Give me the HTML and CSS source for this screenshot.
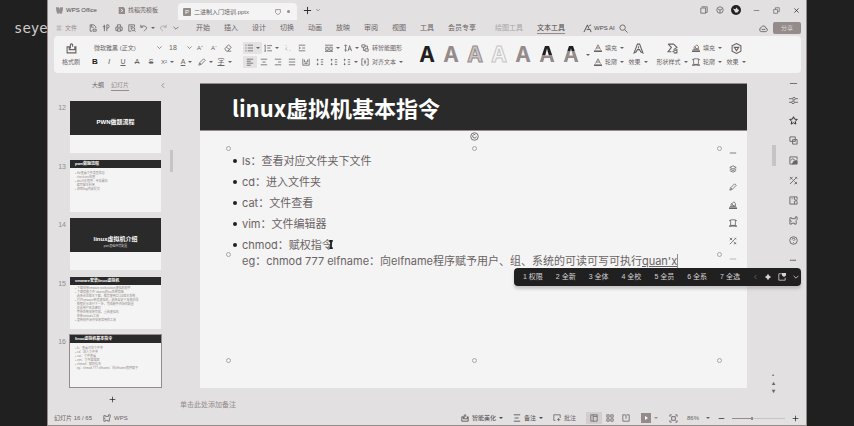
FILE: index.html
```html
<!DOCTYPE html>
<html lang="zh-CN">
<head>
<meta charset="utf-8">
<title>二进制入门培训.pptx</title>
<link rel="stylesheet" href="styles.css">
</head>
<body>
<svg class="defs" aria-hidden="true">
<symbol id="wps" viewBox="0 0 10 10"><path d="M0 1h4l1 4 1-4h4L8 9H5.500L4.500 6 4 9H2z" fill="currentColor"/></symbol>
<symbol id="doc" viewBox="0 0 10 10"><path d="M1 0h7l2 2v8H1z" fill="currentColor" stroke="none"/><path d="M4 3l3 2-3 2" stroke="#fff"/></symbol>
<symbol id="menu" viewBox="0 0 10 10"><path d="M1 2h8M2 5h6M1 8h8"/></symbol>
<symbol id="save" viewBox="0 0 10 10"><path d="M8.500 5V3.500L6 1H1.500v8H4M3 1v3h3M5 9V6.500h4V9z"/></symbol>
<symbol id="export" viewBox="0 0 10 10"><path d="M1 3h3M2 5h2M3 1v8M6 9V1h2q2 2 0 4H6"/></symbol>
<symbol id="print" viewBox="0 0 10 10"><path d="M3 4V1h4v3M3 8H1V4h8v4H7M3 6h4v3H3z"/></symbol>
<symbol id="preview" viewBox="0 0 10 10"><path d="M4 9H1V1h7v3M3 3h3M3 5h2"/><circle cx="6.500" cy="6.500" r="2"/><path d="M8 8l1.500 1.500"/></symbol>
<symbol id="undo" viewBox="0 0 10 10"><path d="M1 1v3h3M1 4q3-3 6-1t0 4L5 9"/></symbol>
<symbol id="redo" viewBox="0 0 10 10"><path d="M9 1v3H6M9 4Q6 1 3 3t0 4l2 2"/></symbol>
<symbol id="down" viewBox="0 0 10 10"><path d="M2 3.500l3 3 3-3"/></symbol>
<symbol id="left" viewBox="0 0 10 10"><path d="M7 1L3 5l4 4"/></symbol>
<symbol id="plus" viewBox="0 0 10 10"><path d="M5 1v8M1 5h8"/></symbol>
<symbol id="minus" viewBox="0 0 10 10"><path d="M1 5h8"/></symbol>
<symbol id="close" viewBox="0 0 10 10"><path d="M2 2l6 6M8 2L2 8"/></symbol>
<symbol id="restore" viewBox="0 0 10 10"><path d="M1 3.500h5.500V9H1zM3.500 3.500V1H9v5.500H6.500"/></symbol>
<symbol id="panel" viewBox="0 0 10 10"><path d="M1 2.500h6V9H1zM2 1h7v7H7"/></symbol>
<symbol id="tray" viewBox="0 0 10 10"><path d="M5 1H1v8h8V6"/><path d="M5 0h5v3L7.500 5 5 3z" fill="currentColor" stroke="none"/></symbol>
<symbol id="spark" viewBox="0 0 10 10"><path d="M5 1l1.500 2.500L9 5 6.500 6.500 5 9 3.500 6.500 1 5l2.500-1.500z" fill="currentColor" stroke="none"/></symbol>
<symbol id="cube" viewBox="0 0 10 10"><circle cx="5" cy="5" r="4"/><path d="M2 3.500l3 1.500 3-1.500M5 5v4"/></symbol>
<symbol id="screen" viewBox="0 0 10 10"><path d="M1 1h8v5L6 9H4L1 6z"/></symbol>
<symbol id="search" viewBox="0 0 10 10"><circle cx="4" cy="4" r="3"/><path d="M6.500 6.500L9.500 9.500"/></symbol>
<symbol id="cloud" viewBox="0 0 10 10"><path d="M2.500 8.500Q0 8 1 5.500 1 4 2.500 4q1-3 4-1.500 1 .5 1 2Q10 5 9 7.500 8.500 8.500 7 8.500zM3 6h4"/></symbol>
<symbol id="bird" viewBox="0 0 10 10"><path d="M1 3l3 1 2-2 1 2 2 1-2 3H4L3 6z" fill="currentColor" stroke="none"/></symbol>
<symbol id="ai" viewBox="0 0 10 10"><path d="M1 9l4-8 1.500 4M4 6h4l1 3M7 2l2-1"/></symbol>
<symbol id="brush" viewBox="0 0 10 10"><path d="M1 3.500h2V6h5V3.500h1V9H1zM4 5V1.500Q5 0 6 1.500v2"/></symbol>
<symbol id="eraser" viewBox="0 0 10 10"><path d="M1 6l4.500-5L9 4 5 9H3zM3 4l4 3M5 9h4"/></symbol>
<symbol id="list" viewBox="0 0 10 10"><path d="M3.500 1.500H10M3.500 5H10M3.500 8.500H10M.5 1.500h1.500M.5 5h1.500M.5 8.500h1.500"/></symbol>
<symbol id="numlist" viewBox="0 0 10 10"><path d="M4 2h6M4 5h4M4 8.500h6M1.500 1v8M.5 2l1-1M.5 9h2"/></symbol>
<symbol id="outdent" viewBox="0 0 10 10"><path d="M2 2h1M4 4.500L2 6l2 2M7 8h1"/></symbol>
<symbol id="indent" viewBox="0 0 10 10"><path d="M1 1.500h8M5 5h4M1 8.500h8M1 3.500L3 5 1 6.500"/></symbol>
<symbol id="textdir" viewBox="0 0 10 10"><path d="M0 1.500h10M1 4h3v4H1zM6 4h3v4H6zM0 9.500h10"/></symbol>
<symbol id="spacing" viewBox="0 0 10 10"><path d="M2 1v8M.5 2.500L2 1l1.500 1.500M.5 7.500L2 9l1.500-1.500M5 9l2-7 2.500 7M5.500 6.500H9"/></symbol>
<symbol id="convert" viewBox="0 0 10 10"><path d="M1 1h4v3H1zM5 6h4v3H5zM3 4v4h2M5 2.500h3V6"/></symbol>
<symbol id="al" viewBox="0 0 10 10"><path d="M1 1.500h8M1 4h5M1 6.500h8M1 9h5"/></symbol>
<symbol id="ac" viewBox="0 0 10 10"><path d="M1 1.500h8M3 5h4M1 8.500h8"/></symbol>
<symbol id="ar" viewBox="0 0 10 10"><path d="M1 1.500h8M5 5h4M1 8.500h8"/></symbol>
<symbol id="aj" viewBox="0 0 10 10"><path d="M1 1.500h8M1 5h8M1 8.500h8"/></symbol>
<symbol id="dist" viewBox="0 0 10 10"><path d="M1 1v8M9 1v8M3 2v3h4V2M3 7h4M1 9h8"/></symbol>
<symbol id="cols" viewBox="0 0 10 10"><path d="M2 1v3M2 6v3M6 2h3M6 5h3M6 8h3M1 2h2M1 8h2"/></symbol>
<symbol id="box" viewBox="0 0 10 10"><path d="M3 1H1v8h2M7 1h2v8H7M5 2v6M3.500 5h3"/></symbol>
<symbol id="sigma" viewBox="0 0 10 10"><path d="M1 1h5l3 3-3 2M1 1l3 3-3 4h3M5 8l4-2v3H6"/></symbol>
<symbol id="hex" viewBox="0 0 10 10"><path d="M5 .5L9 2.500v5L5 9.500 1 7.500v-5zM3 4h4L5 7z"/></symbol>
<symbol id="bigA" viewBox="0 0 10 10"><path d="M1 9l3-8h2l3 8-2-1-1-2H4L3 8zM5 3v2"/></symbol>
<symbol id="fillA" viewBox="0 0 10 10"><path d="M2 7l3-6 3 6M3.500 5h3"/><path d="M0 9h10" stroke-width="2"/></symbol>
<symbol id="bucket" viewBox="0 0 10 10"><path d="M2 5l4-4 2 2v3H3zM3 3l3 3M1 7h8"/><path d="M0 9h10" stroke-width="2"/></symbol>
<symbol id="frame" viewBox="0 0 10 10"><path d="M2 1h6v7H2zM0 2h2M8 2h2"/><path d="M0 9h3M7 9h3M2 8.500h6" stroke-width="1.500"/></symbol>
<symbol id="star" viewBox="0 0 10 10"><path d="M5 .8l1.200 2.700 3 .3L7 6l.6 3L5 7.500 2.400 9 3 6 .8 3.800l3-.3z"/></symbol>
<symbol id="sliders" viewBox="0 0 10 10"><path d="M0 3h4M7 3h3M0 7h3M6 7h4"/><circle cx="5.500" cy="3" r="1.500"/><circle cx="4.500" cy="7" r="1.500"/></symbol>
<symbol id="copy" viewBox="0 0 10 10"><path d="M1 1h6v5H1zM4 4h5v5H4z"/></symbol>
<symbol id="pic" viewBox="0 0 10 10"><path d="M9 4V1H1v8h4M2 5l2-2 3 2"/><path d="M4 9l1-3 4-1v4z" fill="currentColor"/></symbol>
<symbol id="tools" viewBox="0 0 10 10"><path d="M1 9l8-8M1 1l3 3M6 6l3 3M7 1l2 2M1 4l3-3M6 9l3-2"/></symbol>
<symbol id="book" viewBox="0 0 10 10"><path d="M1 1h8v3M1 1v8h8V6M6 1v3l3 1-3 1v3M3 3h1"/></symbol>
<symbol id="chart" viewBox="0 0 10 10"><path d="M1 2h2v1h4V1h2v3L8 5v4H6V8H3v1H1zM1 5l2 1"/></symbol>
<symbol id="help" viewBox="0 0 10 10"><circle cx="5" cy="5" r="4.200"/><path d="M3.500 4q0-1.500 1.500-1.500T6.500 4L5 5.500M5 7v1"/></symbol>
<symbol id="layers" viewBox="0 0 10 10"><path d="M5 1l4 2-4 2-4-2zM1 5l4 2 4-2M1 7l4 2 4-2"/></symbol>
<symbol id="pen" viewBox="0 0 10 10"><path d="M1 9l1-3 5-5 2 2-5 5zM2 6l2 2"/></symbol>
<symbol id="notes" viewBox="0 0 10 10"><path d="M1 1h8M2 5h5M1 9h8"/></symbol>
<symbol id="comment" viewBox="0 0 10 10"><path d="M3 8H1V1h8v4M5 7h4M7 5v4"/></symbol>
<symbol id="normal" viewBox="0 0 10 10"><path d="M1 1h8v8H1zM4 1v8M4 3h5"/></symbol>
<symbol id="grid" viewBox="0 0 10 10"><path d="M1 1h3v3H1zM6 1h3v3H6zM1 6h3v3H1zM6 6h3v3H6z"/></symbol>
<symbol id="read" viewBox="0 0 10 10"><path d="M1 1h3l1 1 1-1h3v8H1zM5 2v4"/></symbol>
<symbol id="fit" viewBox="0 0 10 10"><path d="M1 3V1h2M7 1h2v2M9 7v2H7M3 9H1V7M3 3h4v4H3z"/></symbol>
<symbol id="play" viewBox="0 0 10 10"><path d="M0 0h10v10H0z" fill="currentColor" stroke="none"/><path d="M4 3l3 2-3 2z" fill="#fff" stroke="none"/></symbol>
<symbol id="ibeam" viewBox="0 0 6 10"><path d="M1 1h4M3 1v8M1 9h4" stroke-width="2"/></symbol>
<symbol id="turn" viewBox="0 0 10 10"><circle cx="5" cy="5" r="4.200"/><path d="M7 5a2 2 0 1 1-1-2"/></symbol>
</svg>

<div class="desk">
  <div class="side"><span>seye</span></div>
  <div class="app">
    <header class="tabs">
      <button class="tab home"><svg><use href="#wps"/></svg>WPS Office</button>
      <button class="tab tpl"><svg><use href="#doc"/></svg>找稻壳模板</button>
      <button class="tab active"><i class="p">P</i><span>二进制入门培训.pptx</span><svg><use href="#screen"/></svg><i class="dot"></i></button>
      <button class="ib dark" aria-label="新建"><svg><use href="#plus"/></svg></button>
      <button class="ib sm" aria-label="更多"><svg><use href="#down"/></svg></button>
      <span class="grow"></span>
      <div class="win">
        <button aria-label="面板"><svg><use href="#panel"/></svg></button>
        <button aria-label="应用"><svg><use href="#cube"/></svg></button>
        <button class="avatar" aria-label="账号"><svg><use href="#bird"/></svg></button>
      </div>
      <div class="win ctl">
        <button aria-label="最小化"><svg><use href="#minus"/></svg></button>
        <button aria-label="还原"><svg><use href="#restore"/></svg></button>
        <button class="dark" aria-label="关闭"><svg><use href="#close"/></svg></button>
      </div>
    </header>

    <nav class="menu">
      <button class="file"><svg><use href="#menu"/></svg>文件</button>
      <div class="quick">
        <button aria-label="保存"><svg><use href="#save"/></svg></button>
        <button aria-label="输出"><svg><use href="#export"/></svg></button>
        <button aria-label="打印"><svg><use href="#print"/></svg></button>
        <button aria-label="预览"><svg><use href="#preview"/></svg></button>
        <button class="drop" aria-label="撤销"><svg><use href="#undo"/></svg></button>
        <button class="faint" aria-label="恢复"><svg><use href="#redo"/></svg></button>
        <button aria-label="更多"><svg><use href="#down"/></svg></button>
      </div>
      <div class="items">
        <button>开始</button><button>插入</button><button>设计</button><button>切换</button><button>动画</button><button>放映</button><button>审阅</button><button>视图</button><button>工具</button><button>会员专享</button>
      </div>
      <div class="items ctx"><button class="faint">绘图工具</button><button class="on">文本工具</button></div>
      <button class="wpsai"><svg><use href="#ai"/></svg>WPS AI</button>
      <button class="ib" aria-label="搜索"><svg><use href="#search"/></svg></button>
      <span class="grow"></span>
      <button class="ib" aria-label="云"><svg><use href="#cloud"/></svg></button>
      <button class="share">分享</button>
    </nav>

    <section class="ribbon">
      <button class="stack paint"><svg><use href="#brush"/></svg>格式刷</button>
      <div class="rows font">
        <div class="row">
          <select class="face" aria-label="字体"><option>微软雅黑 (正文)</option></select><svg class="chev"><use href="#down"/></svg>
          <select class="size" aria-label="字号"><option>18</option></select><svg class="chev"><use href="#down"/></svg>
          <button>A⁺</button><button>A⁻</button><button aria-label="清除"><svg><use href="#eraser"/></svg></button>
        </div>
        <div class="row">
          <button class="bold">B</button><button class="ital">I</button><button class="und">U</button><button class="strike">A</button><button class="strike">S</button><button class="drop">X²</button><button class="drop bar">A</button><button class="drop" aria-label="突出显示"><svg><use href="#pen"/></svg></button><button class="drop bar">字</button>
        </div>
      </div>
      <div class="rows para">
        <div class="row">
          <button class="drop sel" aria-label="项目符号"><svg><use href="#list"/></svg></button><button class="drop" aria-label="编号"><svg><use href="#numlist"/></svg></button>
          <button class="faint" aria-label="减少缩进"><svg><use href="#outdent"/></svg></button><button aria-label="增加缩进"><svg><use href="#indent"/></svg></button>
          <span class="grow"></span>
          <button class="drop" aria-label="文字方向"><svg><use href="#textdir"/></svg></button><button class="drop" aria-label="行距"><svg><use href="#spacing"/></svg></button>
        </div>
        <div class="row">
          <button class="sel" aria-label="左对齐"><svg><use href="#al"/></svg></button><button aria-label="居中"><svg><use href="#ac"/></svg></button><button aria-label="右对齐"><svg><use href="#ar"/></svg></button><button aria-label="两端对齐"><svg><use href="#aj"/></svg></button><button aria-label="分散对齐"><svg><use href="#dist"/></svg></button><button aria-label="分栏"><svg><use href="#cols"/></svg></button><button aria-label="列"><svg><use href="#cols"/></svg></button><button class="drop" aria-label="段落"><svg><use href="#cols"/></svg></button>
        </div>
      </div>
      <div class="rows">
        <button class="lab"><svg><use href="#convert"/></svg>转智能图形</button>
        <button class="lab drop"><svg><use href="#box"/></svg>对齐文本</button>
      </div>
      <div class="art">
        <button class="a1">A</button><button class="a2">A</button><button class="a3">A</button><button class="a4">A</button><button class="a2">A</button><button class="a6">A</button><button class="a7">A</button>
      </div>
      <button class="drop only" aria-label="更多样式"></button>
      <div class="rows">
        <button class="lab drop"><svg><use href="#fillA"/></svg>填充</button>
        <button class="lab drop"><svg><use href="#fillA"/></svg>轮廓</button>
      </div>
      <button class="stack"><svg><use href="#bigA"/></svg><span class="drop">效果</span></button>
      <button class="stack shape"><svg><use href="#sigma"/></svg><span class="drop">形状样式</span></button>
      <div class="rows">
        <button class="lab drop"><svg><use href="#bucket"/></svg>填充</button>
        <button class="lab drop"><svg><use href="#frame"/></svg>轮廓</button>
      </div>
      <button class="stack"><svg><use href="#hex"/></svg><span class="drop">效果</span></button>
    </section>

    <main class="work">
      <aside class="nav">
        <div class="navtabs"><button>大纲</button><button class="on">幻灯片</button><span class="grow"></span><button aria-label="收起"><svg><use href="#left"/></svg></button></div>
        <ol class="thumbs">
          <li><span>12</span><div class="thumb cover"><h4>PWN做题流程</h4></div></li>
          <li><span>13</span><div class="thumb"><h5>pwn做题流程</h5><p>▪ file查看文件类型信息<br>&nbsp; checksec检查<br>▪ ida分析程序 - 寻找漏洞<br>&nbsp; 编写脚本利用<br>▪ 获取flag内容提交</p></div></li>
          <li><span>14</span><div class="thumb cover"><h4>linux虚拟机介绍</h4><small>pwn基础环境配置</small></div></li>
          <li><span>15</span><div class="thumb tight"><h5>vmware安装linux虚拟机</h5><p>▪ 下载安装vmware workstation虚拟机软件<br>▪ 下载镜像文件 ubuntu的iso系统镜像<br>&nbsp; 选择合适版本下载，推荐使用22.04版本系统<br>▪ 打开vmware新建虚拟机，选择自定义安装向导<br>&nbsp; 按照提示进行下一步，完成硬件资源的配置<br>&nbsp; 设置用户名及密码<br>&nbsp; 等待系统安装完成，重启虚拟机<br>&nbsp; 安装vmtools工具<br>▪ 更新软件源并安装常用的工具</p></div></li>
          <li class="cur"><span>16</span><div class="thumb"><h5>linux虚拟机基本指令</h5><p>▪ ls：查看对应文件夹<br>▪ cd：进入文件夹<br>▪ cat：文件查看<br>▪ vim：文件编辑器<br>▪ chmod：赋权指令<br>&nbsp; eg：chmod 777 elfname：向elfname程序赋予</p></div></li>
        </ol>
        <button class="add" aria-label="新建幻灯片"><svg><use href="#plus"/></svg></button>
      </aside>
      <div class="bar1"></div>

      <section class="canvas">
        <article class="slide">
          <h1>linux虚拟机基本指令</h1>
          <div class="textbox">
            <ul>
              <li>ls：查看对应文件夹下文件</li>
              <li>cd：进入文件夹</li>
              <li>cat：文件查看</li>
              <li>vim：文件编辑器</li>
              <li>chmod：赋权指令<svg class="mouse"><use href="#ibeam"/></svg><br>eg：chmod 777 elfname：向elfname程序赋予用户、组、系统的可读可写可执行<u>quan'x</u></li>
            </ul>
            <i class="h nw"></i><i class="h n"></i><i class="h ne"></i><i class="h w"></i><i class="h e"></i><i class="h sw"></i><i class="h s"></i><i class="h se"></i><svg class="rot"><use href="#turn"/></svg>
          </div>
          <div class="mini">
            <button aria-label="收起"><svg><use href="#minus"/></svg></button><button aria-label="图层"><svg><use href="#layers"/></svg></button><button aria-label="画笔"><svg><use href="#pen"/></svg></button><button aria-label="填充"><svg><use href="#bucket"/></svg></button><button aria-label="边框"><svg><use href="#frame"/></svg></button><button aria-label="工具"><svg><use href="#tools"/></svg></button><button class="faint" aria-label="更多"><svg><use href="#minus"/></svg></button>
          </div>
          <div class="ime">
            <span>1 权限</span><span>2 全新</span><span>3 全体</span><span>4 全校</span><span>5 全员</span><span>6 全系</span><span>7 全选</span>
            <div class="acts"><svg class="prev"><use href="#left"/></svg><svg><use href="#spark"/></svg><svg><use href="#tray"/></svg><svg><use href="#down"/></svg></div>
          </div>
        </article>
        <input class="note" aria-label="备注" placeholder="单击此处添加备注">
      </section>
      <div class="scroll"><i></i><b>•<br>▴<br>▾</b></div>
      <aside class="rail">
        <button aria-label="收起"><svg><use href="#minus"/></svg></button><button aria-label="属性"><svg><use href="#sliders"/></svg></button><button class="dark" aria-label="收藏"><svg><use href="#star"/></svg></button><button aria-label="复制"><svg><use href="#copy"/></svg></button><button aria-label="图片"><svg><use href="#pic"/></svg></button><button aria-label="工具"><svg><use href="#tools"/></svg></button><button aria-label="素材"><svg><use href="#book"/></svg></button><button aria-label="图表"><svg><use href="#chart"/></svg></button><button aria-label="帮助"><svg><use href="#help"/></svg></button><button>•••</button>
      </aside>
    </main>

    <footer class="status">
      <span>幻灯片 16 / 65</span>
      <button class="lab brand"><svg><use href="#chart"/></svg>WPS</button>
      <span class="grow"></span>
      <button class="lab drop darkish"><svg><use href="#brush"/></svg>智能美化</button>
      <button class="lab drop darkish"><svg><use href="#notes"/></svg>备注</button>
      <button class="lab"><svg><use href="#comment"/></svg>批注</button>
      <div class="views">
        <button class="cur" aria-label="普通"><svg><use href="#normal"/></svg></button><button aria-label="浏览"><svg><use href="#grid"/></svg></button><button aria-label="阅读"><svg><use href="#read"/></svg></button>
      </div>
      <button class="drop play" aria-label="放映"><svg><use href="#play"/></svg></button>
      <button class="ib" aria-label="适应"><svg><use href="#fit"/></svg></button>
      <button class="drop pct">86%</button>
      <div class="zoom">
        <button class="dark" aria-label="缩小"><svg><use href="#minus"/></svg></button>
        <input type="range" min="0" max="100" value="38" aria-label="缩放">
        <button class="dark" aria-label="放大"><svg><use href="#plus"/></svg></button>
      </div>
    </footer>
  </div>
  <div class="side"></div>
</div>
</body>
</html>
```

FILE: styles.css
```css
:root {
  --bg: #e2e0e1;
  --paper: #f4f4f4;
  --ink: #202020;
  --mid: #958b8b;
  --text: #6a6363;
  --pale: #c8c4c6;
}
* { box-sizing: border-box; }
body {
  margin: 0;
  background: var(--ink);
  color: var(--text);
  font: 6px/10px "Liberation Sans", "Noto Sans CJK SC", sans-serif;
}
button, select, input {
  font: inherit;
  color: inherit;
  background: none;
  border: 0;
  padding: 0;
  margin: 0;
  white-space: nowrap;
}
i { font-style: normal; }
svg {
  width: 9px;
  height: 9px;
  flex: none;
  display: block;
  fill: none;
  stroke: currentColor;
  stroke-width: 1;
}
.defs { position: absolute; width: 0; height: 0; }
.grow { flex: 1; }
.dark { color: var(--ink); }
.darkish { color: #4c4747; }
.faint { color: #aaa4a5; }

.desk { display: flex; height: 100vh; }
.side {
  flex: 0 0 47px;
  overflow: hidden;
  padding: 20px 0 0 14px;
  color: #cfcccc;
  font: 14px/17px "DejaVu Sans Mono", monospace;
}
.app {
  flex: 1;
  min-width: 0;
  display: flex;
  flex-direction: column;
  background: var(--bg);
  border: 1px solid var(--mid);
  border-top: 0;
}
button { display: flex; align-items: center; justify-content: center; }
.drop::after {
  content: "";
  flex: none;
  margin-left: 3px;
  border: 2px solid transparent;
  border-top-color: currentColor;
  border-bottom: 0;
}
.lab.drop::after { margin-left: 0; }
.ib { width: 14px; }

/* title bar */
.tabs { display: flex; height: 20px; padding: 0 0 0 8px; }
.tab { gap: 3px; justify-content: flex-start; }
.home { width: 62px; color: #4c4747; }
.home svg, .tpl svg { width: 7px; height: 7px; color: var(--mid); }
.tpl { width: 60px; }
.active {
  width: 119px;
  padding: 0 5px;
  margin: 3px 3px 0 0;
  background: var(--paper);
  border-radius: 4px 4px 0 0;
}
.active span { flex: 1; text-align: left; }
.active svg { width: 6px; height: 6px; }
.active .p { background: var(--mid); color: #fff; width: 8px; height: 8px; line-height: 8px; border-radius: 1px; text-align: center; }
.dot { width: 3px; height: 3px; margin: 0 2px 0 3px; border-radius: 50%; background: var(--mid); }
.tabs .sm { width: 8px; }
.tabs .sm svg { width: 6px; height: 6px; }
.win { display: flex; margin-right: 2px; }
.win button { width: 16px; }
.win svg { width: 8px; height: 8px; }
.win.ctl { margin-right: 0; }
.ctl button { width: 20px; }
.ctl svg { width: 7px; height: 7px; }
.win .avatar svg { width: 10px; height: 10px; padding: 1px; border-radius: 50%; background: var(--ink); color: #ddd; }

/* menu */
.menu { display: flex; height: 16px; padding: 0 5px 0 8px; align-items: center; }
.file { gap: 3px; width: 30px; justify-content: flex-start; color: var(--mid); }
.file svg { width: 6px; height: 6px; }
.quick { display: flex; width: 98px; }
.quick button { width: 13px; height: 12px; }
.quick .drop { width: 18px; }
.quick svg { width: 8px; height: 8px; }
.items { display: flex; gap: 14px; margin-left: 12px; font-size: 7px; }
.ctx { margin-left: 19px; }
.items .on { border-bottom: 1px solid var(--mid); color: #4c4747; }
.wpsai { gap: 2px; margin: 0 2px 0 18px; color: #4c4747; }
.share { width: 28px; height: 12px; border-radius: 2px; background: var(--mid); color: #ddd; margin-left: 3px; }

/* ribbon */
.ribbon {
  display: flex;
  align-items: center;
  height: 37px;
  margin: 0 5px 0 6px;
  background: var(--paper);
  border-radius: 4px;
}
.rows { display: flex; flex-direction: column; gap: 2px; }
.row { display: flex; align-items: center; }
.row button { width: 14px; height: 12px; }
.row .drop { width: 19px; }
.font { width: 155px; }
select { appearance: none; height: 12px; }
.face { width: 68px; padding-left: 6px; }
.size { width: 23px; padding-left: 6px; font-size: 7px; }
.chev { width: 7px; height: 7px; }
.bold { font-weight: 700; font-size: 8px; color: var(--ink); }
.ital { font-style: italic; font-size: 8px; }
.und { text-decoration: underline; font-size: 7px; }
.strike { text-decoration: line-through; font-size: 7px; }
.bar { text-decoration: underline; font-size: 7px; }
.row svg:not(.chev) { width: 8px; height: 8px; }
.row .sel { background: #e4e2e3; border-radius: 1px; }
.para { width: 118px; }
.lab { gap: 3px; height: 12px; justify-content: flex-start; }
.lab svg { width: 8px; height: 8px; }
.stack { flex-direction: column; gap: 3px; width: 28px; height: 26px; }
.stack span { display: flex; align-items: center; }
.stack svg { width: 11px; height: 11px; }
.paint { width: 34px; }
.shape { width: 40px; }
.art { display: flex; margin-left: 12px; }
.art button { width: 24px; height: 26px; font: 700 21px/24px Inter, sans-serif; color: var(--mid); }
.art .a1 { color: var(--ink); }
.art .a3 { -webkit-text-stroke: 1px var(--mid); color: var(--pale); }
.art .a4 { -webkit-text-stroke: 1px var(--pale); color: var(--paper); }
.art .a6, .art .a7 { background: linear-gradient(var(--ink) 50%, var(--mid) 50%); background-clip: text; color: transparent; }
.art .a7 { background-image: linear-gradient(var(--ink) 36%, var(--mid) 36%); }
.only { width: 6px; margin-right: 5px; }

/* work area */
.work { flex: 1; display: flex; min-height: 0; padding-top: 3px; }
.nav { width: 121px; padding-left: 8px; }
.navtabs { display: flex; height: 25px; padding: 3px 3px 10px 36px; gap: 7px; }
.navtabs .on { border-bottom: 1px solid var(--mid); color: var(--mid); }
.navtabs svg { width: 6px; height: 7px; }
.thumbs { list-style: none; margin: 0; padding: 0; height: 286px; display: flex; flex-direction: column; justify-content: space-between; }
.thumbs li { display: flex; gap: 4px; }
.thumbs li > span { width: 10px; padding-top: 2px; font-size: 7px; text-align: right; color: var(--mid); }
.thumb { width: 91px; height: 52px; overflow: hidden; background: var(--paper); display: flex; flex-direction: column; }
.thumb h4 { margin: 0; padding-top: 17px; height: 34px; background: #2b2a2a; color: #fff; font-size: 6px; line-height: 9px; text-align: center; }
.thumb small { margin-top: -8px; font-size: 3px; line-height: 4px; text-align: center; color: #ccc; }
.thumb h5 { margin: 0; padding-left: 5px; height: 8px; background: #2b2a2a; color: #fff; font-size: 4px; line-height: 8px; }
.thumb p { margin: 3px 0 0 5px; font-size: 3px; line-height: 4px; color: var(--mid); white-space: nowrap; }
.tight p { margin-top: 1px; }
.cur .thumb { outline: 1px solid var(--mid); }
.add { width: 100%; height: 24px; color: var(--ink); }
.add svg { width: 7px; height: 7px; }
.bar1 { width: 3px; height: 22px; margin-top: 74px; margin-left: 1px; background: var(--pale); }

.canvas { flex: 1; min-width: 0; display: flex; flex-direction: column; padding: 7px 0 0 27px; }
.slide { position: relative; flex: 1; background: var(--paper); }
.slide h1 {
  margin: 0;
  padding: 0 32px;
  background: #2b2a2a;
  border-top: 1px solid var(--mid);
  border-bottom: 1px solid var(--mid);
  color: #fff;
  font: 700 22px/46px "Noto Sans CJK SC", sans-serif;
}
.textbox {
  position: relative;
  margin: 17px 28px 0;
  height: 212px;
  font: 11px/16px Inter, "Noto Sans CJK SC", sans-serif;
}
.textbox ul { list-style: none; margin: 0; padding: 5px 0 0 14px; }
.textbox li { margin-bottom: 5px; white-space: nowrap; }
.textbox li::before { content: ""; float: left; width: 4px; height: 4px; margin: 6px 0 0 -9px; border-radius: 50%; background: var(--ink); }
.textbox u { border-right: 1px solid var(--mid); }
.mouse { display: inline-block; width: 6px; height: 9px; margin-left: -5px; color: var(--ink); }
.h { position: absolute; width: 5px; height: 5px; margin: -2px; border: 1px solid #aaa4a5; border-radius: 50%; }
.h.nw { left: 0; top: 0; }
.h.n { left: 50%; top: 0; }
.h.ne { left: 100%; top: 0; }
.h.w { left: 0; top: 50%; }
.h.e { left: 100%; top: 50%; }
.h.sw { left: 0; top: 100%; }
.h.s { left: 50%; top: 100%; }
.h.se { left: 100%; top: 100%; }
.rot { position: absolute; left: 50%; top: -12px; margin: -4px; }
.mini { position: absolute; right: 10px; top: 63px; }
.mini button { height: 18px; }
.mini svg { width: 8px; height: 8px; }
.mini button:first-child { height: 14px; }
.ime {
  position: absolute;
  left: 314px;
  right: -54px;
  top: 185px;
  height: 18px;
  display: flex;
  align-items: center;
  gap: 13px;
  padding: 0 3px 0 9px;
  background: var(--ink);
  border-radius: 4px;
  color: #d8d4d4;
  font-size: 7px;
  box-shadow: 0 3px 3px #a8a2a388;
}
.ime span { white-space: nowrap; }
.acts { display: flex; gap: 6px; margin-left: auto; }
.acts svg { width: 8px; height: 8px; }
.acts .prev { width: 5px; height: 8px; color: var(--mid); }
.note { height: 23px; margin-left: -20px; padding: 9px 0 0; width: 100%; font-size: 7px; }
.note::placeholder { color: var(--mid); opacity: 1; }
.scroll { width: 38px; padding: 69px 0 0 25px; display: flex; flex-direction: column; justify-content: space-between; }
.scroll i { width: 4px; height: 21px; background: var(--pale); }
.scroll b { height: 40px; line-height: 8px; }
.rail { width: 21px; }
.rail button { width: 16px; height: 20px; }
.rail button:first-child { height: 14px; }

/* status bar */
.status { display: flex; align-items: center; height: 14px; padding: 0 7px 0 6px; }
.status .lab { margin-right: 10px; }
.status .brand { margin-left: 11px; }
.views { display: flex; }
.views button { width: 16px; height: 12px; }
.views svg { width: 8px; height: 8px; }
.views .cur { background: #d2cecf; }
.play { margin: 0 9px 0 7px; color: var(--mid); }
.play svg { width: 10px; height: 10px; }
.pct { margin: 0 8px 0 6px; gap: 4px; }
.zoom { display: flex; align-items: center; gap: 7px; }
.zoom svg { width: 7px; height: 7px; }
.zoom input { appearance: none; width: 53px; height: 3px; background: linear-gradient(var(--mid), var(--mid)) 0 50% / 38% 1px no-repeat, linear-gradient(var(--pale), var(--pale)) 0 50% / 100% 1px no-repeat; }
.zoom input::-webkit-slider-thumb { appearance: none; width: 2px; height: 3px; background: var(--mid); }
```
